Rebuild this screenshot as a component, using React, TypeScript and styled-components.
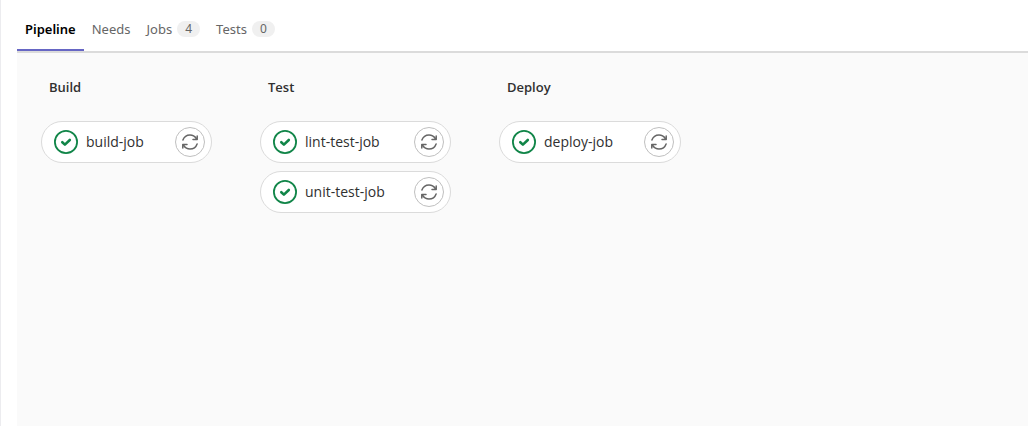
import React from "react";
import styled, { createGlobalStyle } from "styled-components";

const GlobalStyle = createGlobalStyle`
  *, *::before, *::after { box-sizing: border-box; }
  html { height: 100%; }
  body {
    margin: 0;
    height: 100%;
    background: #fff;
    color: #303030;
    font-family: "Open Sans", "Noto Sans", sans-serif;
    font-size: 13px;
    line-height: 20px;
  }
  #root { height: 100%; }
`;

const Page = styled.main`
  display: flex;
  flex-direction: column;
  min-height: 100%;
  padding-left: 16px;
  border-left: 1px solid #ececef;
`;

const TabBar = styled.div`
  display: flex;
  padding-top: 8px;
  border-bottom: 2px solid #dbdbdb;
  font-family: "Noto Sans", "Open Sans", sans-serif;
`;

const Tab = styled.button<{ $active?: boolean }>`
  display: flex;
  align-items: center;
  gap: 5px;
  height: 43px;
  padding: 0 8px;
  border: 0;
  border-bottom: 2px solid ${(p) => (p.$active ? "#6666c4" : "transparent")};
  background: none;
  color: ${(p) => (p.$active ? "#000" : "#666")};
  font: inherit;
  font-weight: ${(p) => (p.$active ? 600 : 400)};
  white-space: nowrap;
  cursor: pointer;
`;

const Badge = styled.span`
  min-width: 23px;
  height: 16px;
  border-radius: 8px;
  background: #f0f0f0;
  color: #666;
  font-size: 12px;
  line-height: 16px;
  text-align: center;
`;

const Graph = styled.section`
  display: flex;
  flex: 1;
  align-items: flex-start;
  gap: 48px;
  padding: 24px;
  background: #fafafa;
`;

const Stage = styled.div<{ $width: number }>`
  flex: 0 0 ${(p) => p.$width}px;
`;

const StageTitle = styled.h2`
  margin: 0 0 24px;
  padding-left: 8px;
  font-size: 13px;
  font-weight: 600;
  line-height: 20px;
`;

const JobList = styled.ul`
  display: flex;
  flex-direction: column;
  gap: 8px;
  margin: 0;
  padding: 0;
  list-style: none;
`;

const JobPill = styled.li`
  display: flex;
  align-items: center;
  height: 42px;
  padding: 0 6px 0 12px;
  border: 1px solid #dbdbdb;
  border-radius: 21px;
  background: #fff;
`;

const JobLink = styled.a`
  display: flex;
  flex: 1;
  align-items: center;
  gap: 8px;
  color: inherit;
  font-size: 14px;
  text-decoration: none;
  white-space: nowrap;
`;

const RetryButton = styled.button`
  display: grid;
  place-items: center;
  width: 30px;
  height: 30px;
  padding: 0;
  border: 1px solid #bfbfbf;
  border-radius: 50%;
  background: #fff;
  color: #666;
  cursor: pointer;
`;

const PassedIcon = () => (
  <svg width="24" height="24" viewBox="0 0 24 24" fill="none" stroke="#108548" aria-hidden="true">
    <circle cx="12" cy="12" r="11.1" strokeWidth="1.8" />
    <path d="M8.3 12.2l2.6 2.4 4.9-4.6" strokeWidth="2.6" strokeLinecap="round" strokeLinejoin="round" />
  </svg>
);

const RetryIcon = () => (
  <svg
    width="18"
    height="18"
    viewBox="0 0 18 18"
    fill="none"
    stroke="currentColor"
    strokeWidth="1.5"
    strokeLinecap="round"
    strokeLinejoin="round"
    aria-hidden="true"
  >
    <path d="M1.9 7C3 3.9 5.8 1.9 9 1.9c2.5 0 4.8 1.200 6.200 3.400" />
    <path d="M16.1 11C15 14.1 12.2 16.1 9 16.1c-2.500 0-4.800-1.200-6.200-3.400" />
    <path d="M16.2 2.900v3.600h-4.200" />
    <path d="M1.800 15.100v-3.600h4.200" />
    <path d="M16.200 4.200v2.300h-2.800z M1.800 13.800v-2.300h2.800z" fill="currentColor" stroke="none" />
  </svg>
);

const tabs: { label: string; count?: number }[] = [
  { label: "Pipeline" },
  { label: "Needs" },
  { label: "Jobs", count: 4 },
  { label: "Tests", count: 0 },
];

const stages = [
  { title: "Build", width: 171, jobs: ["build-job"] },
  { title: "Test", width: 191, jobs: ["lint-test-job", "unit-test-job"] },
  { title: "Deploy", width: 182, jobs: ["deploy-job"] },
];

export default function App() {
  return (
    <>
      <GlobalStyle />
      <Page>
        <TabBar role="tablist">
          {tabs.map((tab, i) => (
            <Tab key={tab.label} type="button" role="tab" aria-selected={i === 0} $active={i === 0}>
              {tab.label}
              {tab.count !== undefined && <Badge>{tab.count}</Badge>}
            </Tab>
          ))}
        </TabBar>
        <Graph role="tabpanel">
          {stages.map((stage) => (
            <Stage key={stage.title} $width={stage.width}>
              <StageTitle>{stage.title}</StageTitle>
              <JobList>
                {stage.jobs.map((job) => (
                  <JobPill key={job}>
                    <JobLink href={`#${job}`}>
                      <PassedIcon />
                      {job}
                    </JobLink>
                    <RetryButton type="button" aria-label={`Retry ${job}`}>
                      <RetryIcon />
                    </RetryButton>
                  </JobPill>
                ))}
              </JobList>
            </Stage>
          ))}
        </Graph>
      </Page>
    </>
  );
}
